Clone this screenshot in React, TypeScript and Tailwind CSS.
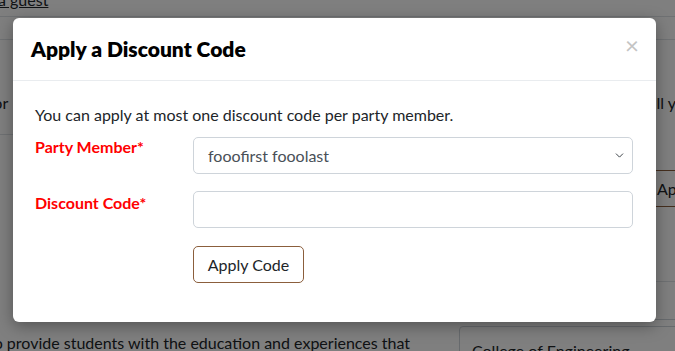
import { ChevronDown } from "lucide-react";

export default function App() {
  return (
    <div className="relative w-[675px] h-[351px] overflow-hidden bg-white text-[#212529] font-['Lato',sans-serif] text-[16px]">
      {/* Page behind the dialog */}
      <div className="w-full">
        <div className="h-[29px] border-b border-[#dee2e6]">
          <span className="block -mt-[12px] -ml-[2px] underline leading-[24px]">a guest</span>
        </div>
        <div className="h-[23px] border-b border-[#dee2e6]" />
        <div className="flex">
          <div className="w-[440px] shrink-0 -ml-[12px]">
            <div className="pt-[51px] h-[95px] border-b border-[#dee2e6] leading-[24px]">
              <span>for</span>
            </div>
            <div className="pt-[196px] leading-[24px] whitespace-nowrap">
              to provide students with the education and experiences that
            </div>
          </div>
          <div className="flex-1 ml-[31px]">
            <div className="pt-[51px] pl-[181px] leading-[24px] whitespace-nowrap">will you</div>
            <div className="mt-[55px] h-[37px] border-y border-[#8b5e3c] flex items-center pl-[198px] whitespace-nowrap">
              Apply
            </div>
            <div className="mt-[74px] border-t border-[#dee2e6]" />
            <div className="mt-[18px] h-[20px] border border-t-0 border-[#ced4da] rounded-b-[4px] flex">
              <div className="w-[37px] border-r border-[#ced4da]" />
            </div>
            <div className="mt-[6px] h-[37px] border border-[#ced4da] rounded-[4px] px-[12px] pt-[12px] whitespace-nowrap">
              College of Engineering
            </div>
          </div>
        </div>
      </div>

      {/* Backdrop */}
      <div className="absolute inset-0 bg-black/50" />

      {/* Dialog */}
      <div className="absolute left-[13px] top-[18px] w-[643px] h-[304px] bg-white rounded-[6px] shadow-[0_4px_16px_rgba(0,0,0,0.35)]">
        <div className="h-[63px] px-[18px] flex items-center justify-between border-b border-[#e9ecef]">
          <h4 className="text-[21px] font-extrabold text-black leading-[28px]">Apply a Discount Code</h4>
          <span className="text-[24px] leading-none text-[#c4c4c4] -mt-[8px] mr-[-1px]">×</span>
        </div>
        <div className="pl-[22px] pr-[23px] pt-[22px]">
          <p className="leading-[24px] text-[#212529]">You can apply at most one discount code per party member.</p>
          <div className="mt-[10px] flex">
            <label className="w-[158px] shrink-0 font-bold text-[#ff0000] leading-[20px]">Party Member*</label>
            <div className="relative flex-1">
              <div className="h-[37px] border border-[#ced4da] rounded-[5px] pl-[14px] flex items-center text-[#495057]">
                fooofirst fooolast
              </div>
              <ChevronDown className="absolute right-[7px] top-[12px] w-[13px] h-[13px] text-[#343a40]" strokeWidth={1.75} />
            </div>
          </div>
          <div className="mt-[17px] flex">
            <label className="w-[158px] shrink-0 font-bold text-[#ff0000] leading-[20px] mt-[2px]">Discount Code*</label>
            <div className="flex-1 h-[37px] border border-[#ced4da] rounded-[5px]" />
          </div>
          <div className="mt-[18px] pl-[158px]">
            <button className="h-[37px] w-[111px] border border-[#8b5e3c] rounded-[5px] text-[#212529] leading-[24px]">
              Apply Code
            </button>
          </div>
        </div>
      </div>
    </div>
  );
}
